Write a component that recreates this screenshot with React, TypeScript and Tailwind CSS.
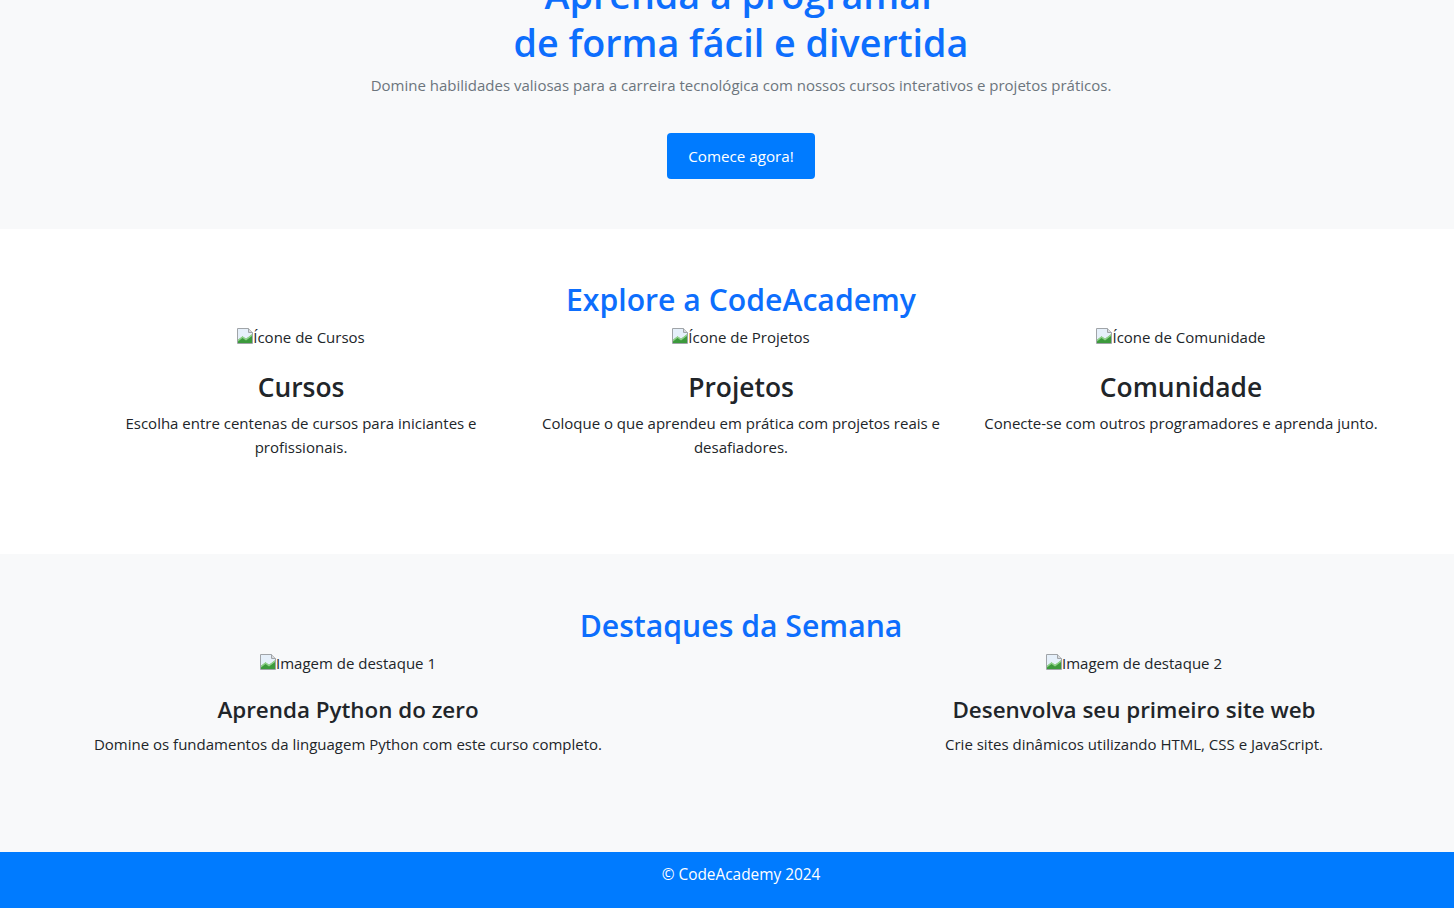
import React from "react";

const font = { fontFamily: '"Open Sans", "Noto Sans", sans-serif' };

function BrokenImg({ alt }: { alt: string }) {
  return (
    <span className="inline-flex items-end leading-6 text-[15px] text-[#212529]">
      <svg width="16" height="16" viewBox="0 0 16 16" className="mb-[5px] shrink-0">
        <path d="M0.5 0.5h11l4 4v11h-15z" fill="#f8f9fa" stroke="#a0a4a8" strokeWidth="1" />
        <path d="M11.5 0.5v4h4" fill="#d8dadc" stroke="#a0a4a8" strokeWidth="1" />
        <path d="M1 15 L1 11.5 L5.5 8 L9 10.5 L15 6 L15 15 Z" fill="#3c9a3c" />
        <path d="M1 11.5 L5.5 8 L9 10.5 L15 6 L15 8 L9 12.5 L5.5 10 L1 13.5Z" fill="#8fd08a" />
        <path d="M1 1 L11 1 L11 5 L15 5 L15 6 L9 10.5 L5.5 8 L1 11.5Z" fill="#e6f0fa" />
      </svg>
      <span>{alt}</span>
    </span>
  );
}

function Feature({ alt, title, text }: { alt: string; title: string; text: string }) {
  return (
    <div className="w-[440px] px-3 flex flex-col items-center text-center">
      <BrokenImg alt={alt} />
      <h3 className="mt-[21px] text-[26.4px] leading-[34px] font-semibold text-[#212529]">{title}</h3>
      <p className="mt-[7px] text-[15px] leading-6 text-[#212529]">{text}</p>
    </div>
  );
}

function Highlight({ alt, title, text }: { alt: string; title: string; text: string }) {
  return (
    <div className="w-[534px] flex flex-col items-center text-center">
      <BrokenImg alt={alt} />
      <h4 className="mt-[20px] text-[22.4px] leading-[29px] font-semibold text-[#212529]">{title}</h4>
      <p className="mt-[8px] text-[15px] leading-6 text-[#212529]">{text}</p>
    </div>
  );
}

export default function App() {
  return (
    <div className="w-[1454px] h-[908px] overflow-hidden bg-white" style={font}>
      <div className="w-[1482px] -mt-[77px]">
        {/* Hero */}
        <section className="bg-[#f8f9fa] pt-12 pb-[50px] flex flex-col items-center text-center">
          <h1 className="text-[37.7px] leading-[48px] font-semibold text-[#0d6efd]">
            Aprenda a programar
            <br />
            de forma fácil e divertida
          </h1>
          <p className="mt-[6px] text-[15px] leading-6 text-[#6c757d]">
            Domine habilidades valiosas para a carreira tecnológica com nossos cursos interativos e projetos práticos.
          </p>
          <button className="mt-9 w-[148px] h-[46px] rounded-[4px] bg-[#007bff] text-white text-[15.2px]">
            Comece agora!
          </button>
        </section>

        {/* Explore */}
        <section className="bg-white h-[325px] pt-[52px] flex flex-col items-center">
          <h2 className="text-[30.2px] leading-[38px] font-semibold text-[#0d6efd]">Explore a CodeAcademy</h2>
          <div className="mt-[6px] w-[1320px] flex">
            <Feature
              alt="Ícone de Cursos"
              title="Cursos"
              text="Escolha entre centenas de cursos para iniciantes e profissionais."
            />
            <Feature
              alt="Ícone de Projetos"
              title="Projetos"
              text="Coloque o que aprendeu em prática com projetos reais e desafiadores."
            />
            <Feature
              alt="Ícone de Comunidade"
              title="Comunidade"
              text="Conecte-se com outros programadores e aprenda junto."
            />
          </div>
        </section>

        {/* Destaques */}
        <section className="bg-[#f8f9fa] h-[298px] pt-[53px] flex flex-col items-center">
          <h2 className="text-[30.2px] leading-[38px] font-semibold text-[#0d6efd]">Destaques da Semana</h2>
          <div className="mt-[6px] w-[1320px] flex justify-between">
            <Highlight
              alt="Imagem de destaque 1"
              title="Aprenda Python do zero"
              text="Domine os fundamentos da linguagem Python com este curso completo."
            />
            <Highlight
              alt="Imagem de destaque 2"
              title="Desenvolva seu primeiro site web"
              text="Crie sites dinâmicos utilizando HTML, CSS e JavaScript."
            />
          </div>
        </section>

        {/* Footer */}
        <footer className="bg-[#007bff] h-[56px] pt-[11px] text-center text-white text-[15.4px] leading-6">
          © CodeAcademy 2024
        </footer>
      </div>
    </div>
  );
}
